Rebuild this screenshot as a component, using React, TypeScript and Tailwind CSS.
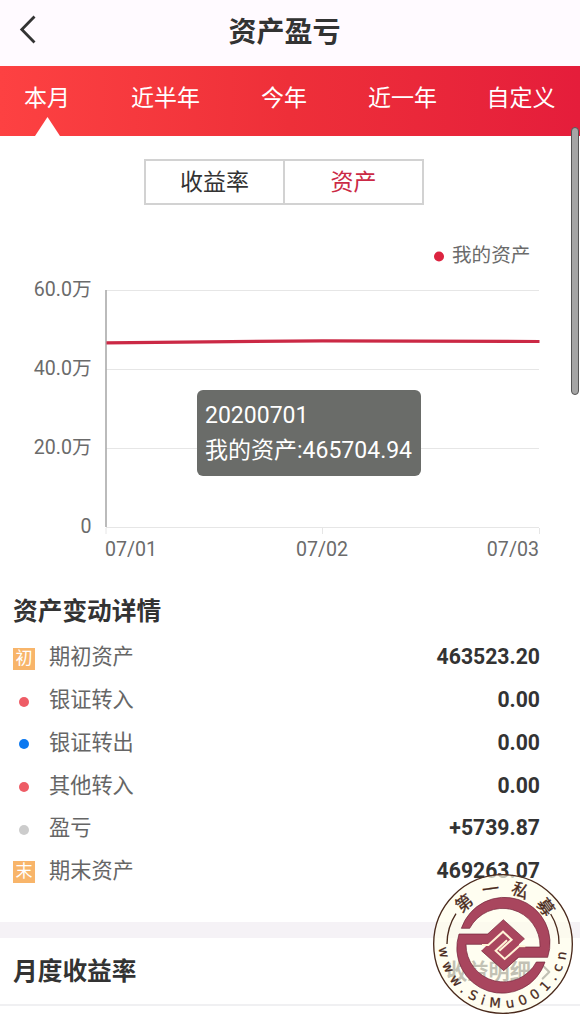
import { ChevronRight } from "lucide-react";

const tabs = ["本月", "近半年", "今年", "近一年", "自定义"];

const rows = [
  { label: "期初资产", value: "463523.20", badge: "初" },
  { label: "银证转入", value: "0.00", dot: "bg-[#ee5c66]" },
  { label: "银证转出", value: "0.00", dot: "bg-[#0a78f0]" },
  { label: "其他转入", value: "0.00", dot: "bg-[#ee5c66]" },
  { label: "盈亏", value: "+5739.87", dot: "bg-[#cccccc]" },
  { label: "期末资产", value: "469263.07", badge: "末" },
];

const yAxis = [
  { label: "60.0万", y: 290.5 },
  { label: "40.0万", y: 369.5 },
  { label: "20.0万", y: 448.5 },
  { label: "0", y: 527.5 },
];

const Header = () => (
  <header className="flex h-[66px] items-center bg-[#fffaff]">
    <svg width="18" height="30" viewBox="0 0 18 30" className="mb-[6px] ml-[19px] shrink-0" fill="none" stroke="#333" strokeWidth="2.8">
      <path d="M15.5 1.5 L2.8 14.5 L15.5 27.5" />
    </svg>
    <h1 className="grow pr-[48px] text-center text-[28px] font-bold leading-none">资产盈亏</h1>
  </header>
);

const Tabs = () => (
  <nav className="flex h-[70px] justify-between bg-linear-to-r from-[#fd4142] via-[#ee2f39] to-[#e51d3b] pl-3 pr-6 text-[23px] text-white">
    {tabs.map((tab, i) => (
      <div key={tab} className="flex w-[70px] flex-col items-center justify-between">
        <span className="pt-[15px] leading-9">{tab}</span>
        {i === 0 && (
          <svg width="26" height="19" viewBox="0 0 26 20" preserveAspectRatio="none" fill="#fff">
            <path d="M13.5 0 L26 20 H1 Z" />
          </svg>
        )}
      </div>
    ))}
  </nav>
);

const Chart = () => (
  <div className="relative">
    <svg width="580" height="345" viewBox="0 230 580 345" className="block" fill="#6b6b6b" fontSize="19.6">
      <circle cx="439" cy="256.5" r="5" fill="#dc2440" />
      <text x="452" y="262">我的资产</text>
      {yAxis.map(({ label, y }) => (
        <g key={label}>
          <text x="91.5" y={y + 5.5} textAnchor="end">{label}</text>
          <path d={`M106 ${y} H539`} stroke="#e6e6e6" />
        </g>
      ))}
      <path d="M106 528 V534 M322.5 528 V534 M539.5 528 V534" stroke="#e6e6e6" />
      <path d="M106 290 V527" stroke="#aaa" strokeWidth="1.6" />
      <path d="M106.5 342.8 L322.5 340.8 L539.5 341.5" stroke="#cb2945" strokeWidth="3.2" fill="none" />
      <text x="105" y="556">07/01</text>
      <text x="322" y="556" textAnchor="middle">07/02</text>
      <text x="539" y="556" textAnchor="end">07/03</text>
    </svg>
    <div className="absolute left-[197px] top-[160px] h-[86px] w-[224px] whitespace-nowrap rounded-md bg-[#6a6c69] py-2 pl-2 text-[23px] leading-[35px] text-white">
      <p>20200701</p>
      <p>我的资产:465704.94</p>
    </div>
  </div>
);

const Stamp = () => (
  <svg width="140" height="140" viewBox="25 28 420 420" className="absolute left-[433px] top-[874px]">
    <defs>
      <path id="upper" d="M85 238 A150 150 0 0 1 385 238" />
      <path id="lower" d="M43 238 A192 192 0 0 0 427 238 V180" />
    </defs>
    <circle cx="235" cy="238" r="208" fill="#fffdeb" fillOpacity="0.7" />
    <circle cx="235" cy="238" r="208" fill="none" stroke="#4a2a1c" strokeWidth="4" />
    <path d="M67 238 A168 168 0 0 1 94 147 M378 148 A168 168 0 0 1 403 238" fill="none" stroke="#4a2a1c" strokeWidth="4" />
    <g fill="#a9465e">
      <g stroke="#6f2338" strokeWidth="2">
        <path d="M110 191 A135 135 0 0 1 369 278 H262 V247 H346 A112 112 0 0 0 135 191 Z" />
        <path d="M361 292 A135 135 0 0 1 103 208 H210 V239 H124 A112 112 0 0 0 335 292 Z" />
      </g>
      <path d="M189 208 L236 165 L300 223 L283 239 V278 L237 318 L170 258 L188 240 Z" />
    </g>
    <path d="M189 208 L236 165 L300 223 M170 258 L237 318 L281 278" fill="none" stroke="#6f2338" strokeWidth="2" />
    <path d="M172 241 H191 L235 201 L261 225 L224 258 M302 245 H283 L240 283 L213 258 L247 227" fill="none" stroke="#fff3d6" strokeWidth="6" />
    <g fill="#4a2a1c" stroke="#4a2a1c">
      <text fontSize="51" fontFamily="Noto Sans CJK SC" letterSpacing="30" strokeWidth="1">
        <textPath href="#upper" startOffset="94">第一私募</textPath>
      </text>
      <text fontSize="40" fontFamily="DejaVu Sans" letterSpacing="17.5" strokeWidth="0.8">
        <textPath href="#lower" startOffset="11">www.SiMu001.cn</textPath>
      </text>
    </g>
  </svg>
);

const App = () => {
  return (
    <div className="relative h-[1020px] w-[580px] overflow-hidden bg-white font-['Roboto','Noto_Sans_CJK_SC',sans-serif] text-[#333]">
      <Header />
      <Tabs />

      <div className="mx-auto mt-[23px] flex h-[46px] w-[280px] -translate-x-[6px] border-2 border-[#d2d2d2] text-[23px]">
        <div className="flex flex-1 items-center justify-center border-r-2 border-[#d2d2d2] pt-[3px]">收益率</div>
        <div className="flex flex-1 items-center justify-center pt-[3px] text-[#cb2945]">资产</div>
      </div>

      <div className="pt-[25px]">
        <Chart />
      </div>

      <section className="h-[347px] pl-[13px] pr-10 pt-[19px]">
        <h2 className="text-[24.7px] font-bold leading-9">资产变动详情</h2>
        <ul className="pt-[6px]">
          {rows.map(({ label, value, badge, dot }) => (
            <li key={label} className="flex h-[42.7px] items-center text-[21.2px]">
              <div className="flex w-9 items-center">
                {badge ? (
                  <span className="mt-[3px] h-[22px] w-[22px] bg-[#f8b56a] text-center text-[17px] leading-[21px] text-white">{badge}</span>
                ) : (
                  <span className={`ml-[6px] mt-[3px] h-[10px] w-[10px] rounded-full ${dot}`} />
                )}
              </div>
              <span className="text-[#666]">{label}</span>
              <span className="ml-auto font-bold">{value}</span>
            </li>
          ))}
        </ul>
      </section>

      <div className="h-4 bg-[#f5f2f6]" />

      <section className="flex h-[68px] items-center justify-between border-b-2 border-[#f0f0f2] pl-[13px] pr-[21px]">
        <h2 className="pt-[2px] text-[24.7px] font-bold">月度收益率</h2>
        <div className="flex items-center pt-[2px] text-[21.2px] font-bold text-[#333]">
          收益明细
          <ChevronRight size={26} strokeWidth={2} className="ml-[2px]" />
        </div>
      </section>

      <div className="absolute left-[571px] top-[127px] h-[268px] w-2 rounded-full border border-[#555] bg-[#a5a5a5]" />
      <Stamp />
    </div>
  );
};

export default App;
